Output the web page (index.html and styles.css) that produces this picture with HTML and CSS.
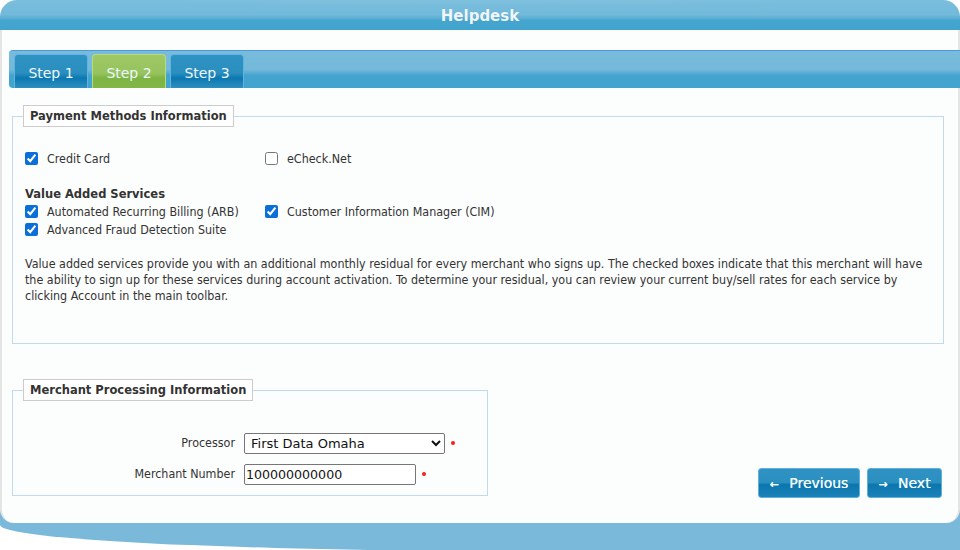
FILE: index.html
```html
<!DOCTYPE html>
<html>
<head>
<meta charset="utf-8">
<link rel="stylesheet" href="styles.css">
</head>
<body>
<div class="page">
  <div class="header">Helpdesk</div>
  <div class="wrap">
    <div class="panel">
      <div class="tabbar">
        <div class="tab">Step 1</div>
        <div class="tab active">Step 2</div>
        <div class="tab">Step 3</div>
      </div>

      <fieldset class="box box-pay">
        <legend>Payment Methods Information</legend>
        <div class="grid top-grid">
          <label class="chk"><input type="checkbox" checked> <span>Credit Card</span></label>
          <label class="chk"><input type="checkbox"> <span>eCheck.Net</span></label>
        </div>
        <div class="vas">Value Added Services</div>
        <div class="grid">
          <label class="chk"><input type="checkbox" checked> <span>Automated Recurring Billing (ARB)</span></label>
          <label class="chk"><input type="checkbox" checked> <span>Customer Information Manager (CIM)</span></label>
          <label class="chk"><input type="checkbox" checked> <span>Advanced Fraud Detection Suite</span></label>
        </div>
        <p class="note">Value added services provide you with an additional monthly residual for every merchant who signs up. The checked boxes indicate that this merchant will have the ability to sign up for these services during account activation. To determine your residual, you can review your current buy/sell rates for each service by clicking Account in the main toolbar.</p>
      </fieldset>

      <div class="lower">
        <fieldset class="box box-merch">
          <legend>Merchant Processing Information</legend>
          <div class="frow">
            <span class="flabel">Processor</span>
            <select class="fsel"><option>First Data Omaha</option></select>
            <span class="req"></span>
          </div>
          <div class="frow">
            <span class="flabel">Merchant Number</span>
            <input class="finp" type="text" value="100000000000">
            <span class="req"></span>
          </div>
        </fieldset>
        <div class="buttons">
          <button class="btn btn-prev"><span class="arr">&larr;</span> Previous</button>
          <button class="btn btn-next"><span class="arr">&rarr;</span> Next</button>
        </div>
      </div>
    </div>
  </div>
</div>
</body>
</html>
```

FILE: styles.css
```css
html, body {
  margin: 0;
  padding: 0;
  background: #ffffff;
}
body {
  font-family: "DejaVu Sans Condensed", "DejaVu Sans", sans-serif;
  font-stretch: condensed;
  font-size: 12.4px;
  color: #333333;
}
.page {
  width: 960px;
  height: 550px;
  overflow: hidden;
}
.header {
  height: 30px;
  border-radius: 17px 17px 0 0;
  background:
    radial-gradient(ellipse 70% 60% at 50% -20%, rgba(255,255,255,0.08), rgba(255,255,255,0) 70%),
    linear-gradient(to bottom, #7abedd 0%, #72b9da 50%, #5fafd5 60%, #44a5cf 68%, #42a4ce 100%);
  color: #eef7fb;
  font-family: "DejaVu Sans", sans-serif;
  font-stretch: normal;
  font-weight: bold;
  font-size: 15px;
  text-align: center;
  line-height: 32px;
  text-shadow: 0 0 1px rgba(0,0,0,0.15);
}
.wrap {
  background: #7bb9da;
  border-bottom-left-radius: 520px 26px;
  padding-bottom: 28px;
}
.panel {
  background: #fcfdfd;
  border-left: 2px solid #e4e4e4;
  border-right: 2px solid #e4e4e4;
  border-radius: 0 0 14px 14px;
  height: 473px;
  padding: 20px 0 0 7px;
  box-sizing: content-box;
}
.tabbar {
  margin-right: -2px;
  border-top: 1px solid #4b9bd8;
  border-radius: 4px 0 0 4px;
  background: linear-gradient(to bottom, #78bbdc 0%, #74b9da 50%, #5caed5 58%, #43a5cf 66%, #42a4ce 100%);
  display: flex;
  gap: 4px;
  padding: 3px 0 0 5px;
  box-sizing: border-box;
  height: 38px;
}
.tab {
  width: 74px;
  height: 34px;
  box-sizing: border-box;
  border: 1px solid #62b4df;
  border-bottom: none;
  border-radius: 4px 4px 0 0;
  background: linear-gradient(to bottom, #2e92c3 0%, #2a8ebf 55%, #0a78b0 70%, #2f8fc0 100%);
  color: #eef7fc;
  font-family: "DejaVu Sans", sans-serif;
  font-stretch: normal;
  font-size: 14px;
  text-align: center;
  line-height: 36px;
}
.tab.active {
  border-color: #b7dc7e;
  background: linear-gradient(to bottom, #9ec866 0%, #97c45e 55%, #7eb443 70%, #82b746 100%);
}
.box {
  margin: 0;
  border: 1px solid #c3daec;
  padding: 0 12px;
  min-width: 0;
}
.box legend {
  margin-left: -2px;
  border: 1px solid #cccccc;
  background: #ffffff;
  padding: 0 6px;
  height: 22px;
  box-sizing: border-box;
  line-height: 20px;
  font-family: "DejaVu Sans", sans-serif;
  font-stretch: normal;
  font-weight: bold;
  font-size: 11.5px;
  color: #333;
}
.box-pay {
  margin: 17px 14px 0 3px;
  height: 239px;
  box-sizing: border-box;
}
.grid {
  display: grid;
  grid-template-columns: 240px auto;
  row-gap: 5px;
}
.top-grid {
  margin-top: 25px;
}
.chk {
  display: flex;
  align-items: center;
  height: 13px;
  gap: 9px;
}
.chk input {
  margin: 0;
  width: 13px;
  height: 13px;
  accent-color: #0b6fd9;
}
.vas {
  margin-top: 22px;
  margin-bottom: 4px;
  font-family: "DejaVu Sans", sans-serif;
  font-stretch: normal;
  font-weight: bold;
  font-size: 11.5px;
  line-height: 14px;
}
.note {
  margin: 20px 0 0 0;
  line-height: 16px;
}
.lower {
  display: flex;
  justify-content: space-between;
  align-items: flex-end;
  margin-top: 35px;
  padding-right: 16px;
}
.box-merch {
  margin-left: 3px;
  width: 476px;
  height: 117px;
  box-sizing: border-box;
  padding-top: 32px;
}
.frow {
  display: flex;
  align-items: center;
  height: 20px;
  margin-bottom: 11px;
}
.flabel {
  width: 219px;
  text-align: right;
  padding-right: 9px;
  box-sizing: border-box;
  font-size: 12.4px;
  position: relative;
  top: -1px;
}
.fsel {
  width: 201px;
  height: 21px;
  margin: 0;
  border: 1px solid #767676;
  border-radius: 2px;
  background: #ffffff;
  font-family: "DejaVu Sans", sans-serif;
  font-size: 13px;
  color: #111;
  padding: 0 2px;
}
.finp {
  width: 172px;
  height: 21px;
  margin: 0;
  box-sizing: border-box;
  border: 1px solid #767676;
  border-radius: 2px;
  font-family: "DejaVu Sans", sans-serif;
  font-size: 12.6px;
  color: #111;
  padding: 0 1px;
}
.req {
  width: 4px;
  height: 4px;
  border-radius: 50%;
  background: #ff1a1a;
  margin-left: 6px;
}
.buttons {
  display: flex;
  gap: 7px;
  margin-bottom: -2px;
}
.btn {
  height: 30px;
  box-sizing: border-box;
  border: 1px solid #5fb1dd;
  border-radius: 3px;
  background: linear-gradient(to bottom, #2f92c3 0%, #2b8fc0 48%, #0b76ae 56%, #1b82b8 100%);
  color: #f2f9fd;
  font-family: "DejaVu Sans", sans-serif;
  font-size: 14px;
  padding: 0;
  cursor: pointer;
  text-shadow: 0 0 0.6px #ffffff;
}
.btn-prev { width: 102px; }
.btn-next { width: 75px; }
.arr {
  font-size: 11px;
  font-weight: bold;
  margin-right: 6px;
}
```
